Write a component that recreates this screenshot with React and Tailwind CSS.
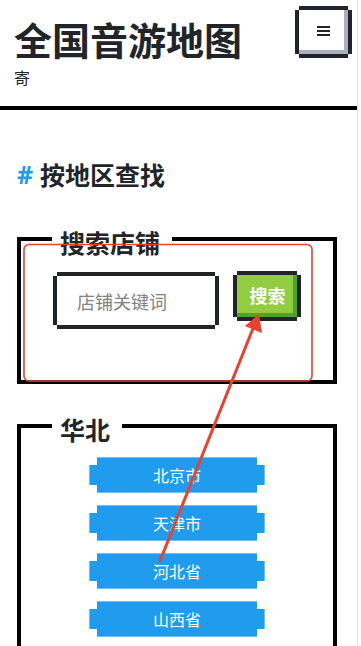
const pixelBorder =
  'shadow-[0_-4px_0_0_#212529,0_4px_0_0_#212529,-4px_0_0_0_#212529,4px_0_0_0_#212529]';

const regions = ['北京市', '天津市', '河北省', '山西省'];

const Container = ({ title, children, className = '' }) => (
  <section className={`ml-[17px] w-[320px] border-4 border-black ${className}`}>
    <div className="-mt-[11px] ml-[31px] w-fit bg-white pl-[8px] pr-[12px] text-[25px] font-bold leading-[25px] text-[#212529]">
      {title}
    </div>
    {children}
  </section>
);

const RegionButton = ({ name }) => (
  <div className="flex items-center">
    <span className="h-[20px] w-[8px] border-l border-[#6cbef3] bg-[#209cee]" />
    <button className="flex h-[36px] w-[160px] items-center justify-center border-y border-[#6cbef3] bg-[#209cee] text-[16px] leading-[16px] text-white">
      {name}
    </button>
    <span className="h-[20px] w-[8px] border-r border-[#6cbef3] bg-[#209cee]" />
  </div>
);

export default function App() {
  return (
    <div className="relative min-h-[646px] w-[358px] border-r border-[#e4e4e4] bg-white font-['Noto_Sans_CJK_SC','Noto_Sans',sans-serif] text-[#212529]">
      <header className="flex h-[110px] items-start justify-between border-b-4 border-black pl-[14px] pr-[9px] pt-[10px]">
        <div className="mt-[10px]">
          <h1 className="text-[38px] font-bold leading-[38px]">全国音游地图</h1>
          <p className="mt-[11px] text-[16px] leading-[16px]">寄</p>
        </div>
        <button
          className={`flex h-[44px] w-[49px] flex-col items-center justify-center gap-[2px] bg-white pb-[2px] shadow-[inset_-4px_-4px_0_0_#adafbc,0_-4px_0_0_#212529,0_4px_0_0_#212529,-4px_0_0_0_#212529,4px_0_0_0_#212529]`}
        >
          <span className="h-[2px] w-[13px] bg-[#212529]" />
          <span className="h-[2px] w-[13px] bg-[#212529]" />
          <span className="h-[2px] w-[13px] bg-[#212529]" />
        </button>
      </header>

      <h2 className="ml-[17px] mt-[52px] flex items-center text-[25px] font-bold leading-[25px]">
        <span className="w-[23px] font-['Noto_Sans',sans-serif] text-[#209cee]">#</span>
        <span>按地区查找</span>
      </h2>

      <Container title="搜索店铺" className="mt-[50px] pb-[55px]">
        <div className="ml-[36px] mt-[21px] flex items-start gap-[22px]">
          <input
            placeholder="店铺关键词"
            className={`h-[49px] w-[158px] bg-white pl-[20px] text-[18px] outline-none placeholder:text-[#828282] ${pixelBorder}`}
          />
          <button className="-mt-[1px] flex h-[42px] w-[60px] items-center justify-center bg-[#92cc41] pb-[3px] pl-[1px] text-[18px] font-bold leading-[18px] text-white shadow-[inset_-4px_-4px_0_0_#4aa52e,0_-4px_0_0_#212529,0_4px_0_0_#212529,-4px_0_0_0_#212529,4px_0_0_0_#212529]">
            搜索
          </button>
        </div>
      </Container>

      <Container title="华北" className="mt-[40px] pb-[24px]">
        <div className="mt-[15px] flex flex-col items-center gap-[12px]">
          {regions.map((r) => (
            <RegionButton key={r} name={r} />
          ))}
        </div>
      </Container>

      {/* red annotation drawn over the page */}
      <svg
        className="pointer-events-none absolute left-0 top-0"
        width="361"
        height="646"
        viewBox="0 0 361 646"
      >
        <rect x="24" y="244.5" width="288" height="136.5" rx="5" fill="none" stroke="#e8412c" strokeWidth="1.6" />
        <line x1="160" y1="561" x2="254" y2="326" stroke="#e8412c" strokeWidth="3" strokeLinecap="round" />
        <polygon points="259,314 262,333 245,326" fill="#e8412c" />
      </svg>
    </div>
  );
}
